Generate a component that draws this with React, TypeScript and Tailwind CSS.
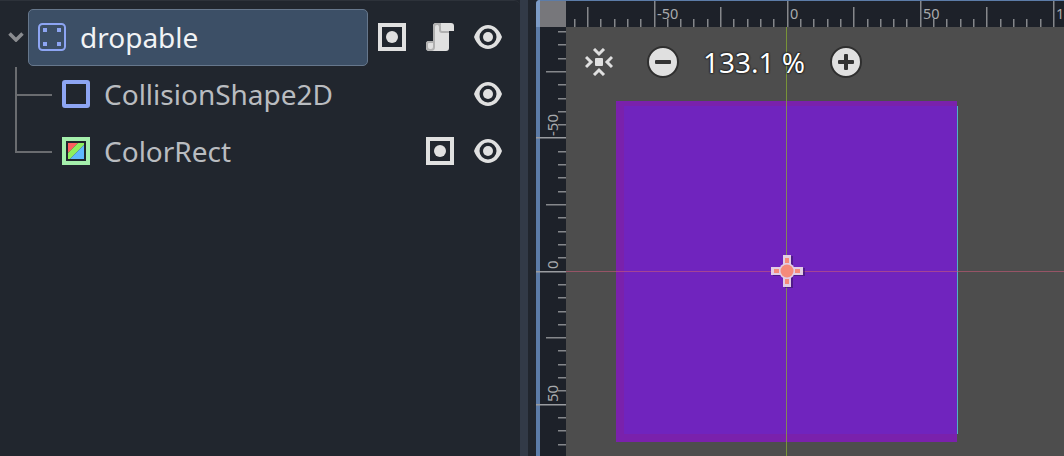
const FONT = "font-['Noto_Sans',sans-serif]";

function Node2DIcon() {
  return (
    <svg width="28" height="28" viewBox="0 0 28 28" fill="none">
      <rect x="1" y="1" width="26" height="26" rx="3.5" stroke="#8da5f3" strokeWidth="2" />
      <g fill="#8da5f3">
        <rect x="5" y="5" width="4" height="4" />
        <rect x="19" y="5" width="4" height="4" />
        <rect x="5" y="19" width="4" height="4" />
        <rect x="19" y="19" width="4" height="4" />
      </g>
    </svg>
  );
}

function CollisionIcon() {
  return (
    <svg width="28" height="28" viewBox="0 0 28 28" fill="none">
      <rect x="2" y="2" width="24" height="24" rx="1" stroke="#8da5f3" strokeWidth="4" />
    </svg>
  );
}

function ColorRectIcon() {
  return (
    <svg width="28" height="28" viewBox="0 0 28 28" fill="none">
      <rect width="28" height="28" fill="#a5efac" />
      <rect x="4" y="4" width="20" height="20" fill="#21262e" />
      <path d="M6 6h10L6 16z" fill="#ff5f5f" />
      <path d="M16 6h6v2L8 22H6v-6z" fill="#8eef5f" />
      <path d="M22 8v14H8z" fill="#5fb8ff" />
    </svg>
  );
}

function GroupIcon() {
  return (
    <svg width="28" height="28" viewBox="0 0 28 28" fill="none">
      <rect x="2" y="2" width="24" height="24" stroke="#e0e0e0" strokeWidth="4" />
      <circle cx="14" cy="14" r="6" fill="#e0e0e0" />
    </svg>
  );
}

function ScriptIcon() {
  return (
    <svg width="28" height="28" viewBox="0 0 28 28" fill="none">
      <path
        d="M10 0H25a3 3 0 0 1 3 3V8H23V25a3 3 0 0 1-3 3H3a3 3 0 0 1-3-3V21a3 3 0 0 1 3-3H7V3a3 3 0 0 1 3-3z"
        fill="#e0e0e0"
      />
      <path
        d="M15 1H11a3 3 0 0 0-3 3V24a3 3 0 0 1-3 3H4a3 3 0 0 1-3-3V21a2 2 0 0 1 2-2H7"
        stroke="#b0b0b0"
        strokeWidth="2"
      />
      <path d="M12 1a3 3 0 0 1 2 3V7a2 2 0 0 0 2 2H23" stroke="#b0b0b0" strokeWidth="2" />
    </svg>
  );
}

function EyeIcon() {
  return (
    <svg width="28" height="24" viewBox="0 0 28 24" fill="none">
      <path
        fillRule="evenodd"
        d="M14 0C7.500 0 2.500 5 0 12c2.500 7 7.500 12 14 12s11.500-5 14-12C25.500 5 20.500 0 14 0zm0 3.500a8.500 8.500 0 1 1 0 17 8.500 8.500 0 0 1 0-17z"
        fill="#e0e0e0"
      />
      <circle cx="14" cy="12" r="5" fill="#e0e0e0" />
    </svg>
  );
}

function Chevron() {
  return (
    <svg width="16" height="10" viewBox="0 0 16 10" fill="none">
      <path d="M1.500 1.500L8 8l6.500-6.500" stroke="#8a8c90" strokeWidth="3.500" />
    </svg>
  );
}

function FitIcon() {
  return (
    <svg width="28" height="28" viewBox="0 0 28 28" fill="none">
      <rect x="10" y="10" width="8" height="8" rx="1" fill="#e0e0e0" />
      <g stroke="#e0e0e0" strokeWidth="3">
        <path d="M9 1l5 5 5-5" />
        <path d="M9 27l5-5 5 5" />
        <path d="M1 9l5 5-5 5" />
        <path d="M27 9l-5 5 5 5" />
      </g>
    </svg>
  );
}

function ZoomButton({ plus }: { plus?: boolean }) {
  return (
    <div className="flex h-8 w-8 items-center justify-center rounded-full border-2 border-[#2f2f2f] bg-[#e0e0e0]">
      <svg width="18" height="18" viewBox="0 0 18 18">
        <rect x="1" y="7" width="16" height="4" rx="1" fill="#333" />
        {plus && <rect x="7" y="1" width="4" height="16" rx="1" fill="#333" />}
      </svg>
    </div>
  );
}

function HRuler() {
  const step = 13.31;
  const ticks = Array.from({ length: 39 }, (_, i) => i);
  return (
    <svg width="498" height="26" viewBox="0 1 498 26" className="block">
      {ticks.map((i) => {
        // x of tick 0 is the -75 mark, 21px into the ruler
        const x = 21 + (i - 1) * step;
        const n = i - 1;
        const len = n % 10 === 5 ? 27 : n % 5 === 0 ? 20 : 8;
        return <rect key={i} x={Math.round(x)} y={27 - len} width="1.5" height={len} fill="#85878b" />;
      })}
      <g fontSize="14.5" fill="#a8aaad" fontFamily="'Noto Sans',sans-serif">
        <text x="91" y="19">-50</text>
        <text x="224" y="19">0</text>
        <text x="357" y="19">50</text>
        <text x="490" y="19">100</text>
      </g>
    </svg>
  );
}

function VRuler() {
  const step = 13.31;
  const ticks = Array.from({ length: 32 }, (_, i) => i);
  return (
    <svg width="26" height="429" className="block overflow-visible">
      {ticks.map((i) => {
        const y = 4 + i * step;
        const major = i % 10 === 8;
        const len = major ? 30 : i % 5 === 3 ? 20 : 8;
        return (
          <rect
            key={i}
            x={26 - len}
            y={Math.round(y)}
            width={len}
            height="1.500"
            fill={major ? "#9a9ca0" : "#85878b"}
          />
        );
      })}
      <g fontSize="15" fill="#a8aaad" fontFamily="'Noto Sans',sans-serif">
        <text transform="translate(18 109) rotate(-90)">-50</text>
        <text transform="translate(18 242) rotate(-90)">0</text>
        <text transform="translate(18 375) rotate(-90)">50</text>
      </g>
    </svg>
  );
}

function OriginGizmo() {
  return (
    <svg width="40" height="40" viewBox="-20 -20 40 40" className="absolute left-[767px] top-[251px]">
      <path d="M-4-16H4V-4H16V4H4V16H-4V4H-16V-4H-4z" fill="#3a1668" opacity="0.6" transform="translate(2 1)" />
      <path d="M-4-16H4V-4H16V4H4V16H-4V4H-16V-4H-4z" fill="#e2cde4" />
      <circle r="8" fill="#e2cde4" />
      <g fill="#f58a7a">
        <rect x="-2" y="-13" width="4" height="5" />
        <rect x="-2" y="8" width="4" height="5" />
        <rect x="-13" y="-2" width="5" height="4" />
        <rect x="8" y="-2" width="5" height="4" />
        <circle r="6.500" />
      </g>
    </svg>
  );
}

function Row({ children, right }: { children: React.ReactNode; right: React.ReactNode }) {
  return (
    <div className="flex h-[57px] items-center pb-px">
      {children}
      <div className="ml-auto flex items-center gap-5 pr-[18px]">{right}</div>
    </div>
  );
}

export default function App() {
  return (
    <div className={`relative flex h-[456px] w-[1064px] overflow-hidden bg-[#21262e] ${FONT}`}>
      <div className="relative h-full w-[520px] shrink-0 rounded-tr-md border-t border-[#2d323a] bg-[#21262e] pt-2">
        <div className="absolute left-[15px] top-[66px] h-[86px] w-[2px] bg-[#6a6c70]" />
        <div className="absolute left-[15px] top-[93px] h-[2px] w-[37px] bg-[#6a6c70]" />
        <div className="absolute left-[15px] top-[150px] h-[2px] w-[37px] bg-[#6a6c70]" />

        <Row
          right={
            <>
              <GroupIcon />
              <ScriptIcon />
              <EyeIcon />
            </>
          }
        >
          <div className="flex w-7 justify-center pl-1">
            <Chevron />
          </div>
          <div className="mb-[-1px] flex h-[57px] w-[340px] items-center gap-[14px] rounded-[5px] border border-[#66778c] bg-[#3c4f66] pb-px pl-[9px] text-[28px] text-[#f1f3f5]">
            <Node2DIcon />
            dropable
          </div>
        </Row>
        <Row right={<EyeIcon />}>
          <div className="flex items-center gap-[14px] pl-[62px] text-[28px] text-[#b9bcc0]">
            <CollisionIcon />
            CollisionShape2D
          </div>
        </Row>
        <Row
          right={
            <>
              <GroupIcon />
              <EyeIcon />
            </>
          }
        >
          <div className="flex items-center gap-[14px] pl-[62px] text-[28px] text-[#b9bcc0]">
            <ColorRectIcon />
            ColorRect
          </div>
        </Row>
      </div>

      <div className="w-2 shrink-0 bg-[#323a47]" />
      <div className="w-2 shrink-0 bg-[#21262e]" />

      <div className="relative flex min-w-0 flex-1 flex-col rounded-tl-[4px] border-t border-l-4 border-[#5c7ca8] bg-[#1d2129]">
        <div className="absolute -left-1 -top-px h-[27px] w-1 rounded-tl-[4px] bg-[#7d9cc6]" />
        <div className="flex h-[26px]">
          <div className="h-[26px] w-[26px] shrink-0 bg-[#77777b]" />
          <HRuler />
        </div>
        <div className="flex flex-1">
          <VRuler />
          <div className="flex-1 bg-[#4d4d4d]" />
        </div>
      </div>

      {/* canvas contents */}
      <div className="absolute left-[616px] top-[101px] h-[341px] w-[341px] bg-[#7a21ac]">
        <div className="ml-2 mt-[5px] h-[328px] w-[334px] border-r border-[#4fb0c8] bg-[#7024be]" />
      </div>
      <div className="absolute left-[786px] top-[27px] h-[429px] w-px bg-[#8ab02e] opacity-70" />
      <div className="absolute left-[566px] top-[271px] h-px w-[498px] bg-[#c85a78] opacity-60" />
      <OriginGizmo />

      <div className="absolute left-[585px] top-[46px] flex h-8 items-center">
        <FitIcon />
        <div className="ml-[34px]">
          <ZoomButton />
        </div>
        <span className="ml-6 w-[127px] text-[28px] text-white [text-shadow:0_0_2px_#111,0_0_2px_#111,0_0_1px_#111]">
          133.1 %
        </span>
        <ZoomButton plus />
      </div>
    </div>
  );
}
